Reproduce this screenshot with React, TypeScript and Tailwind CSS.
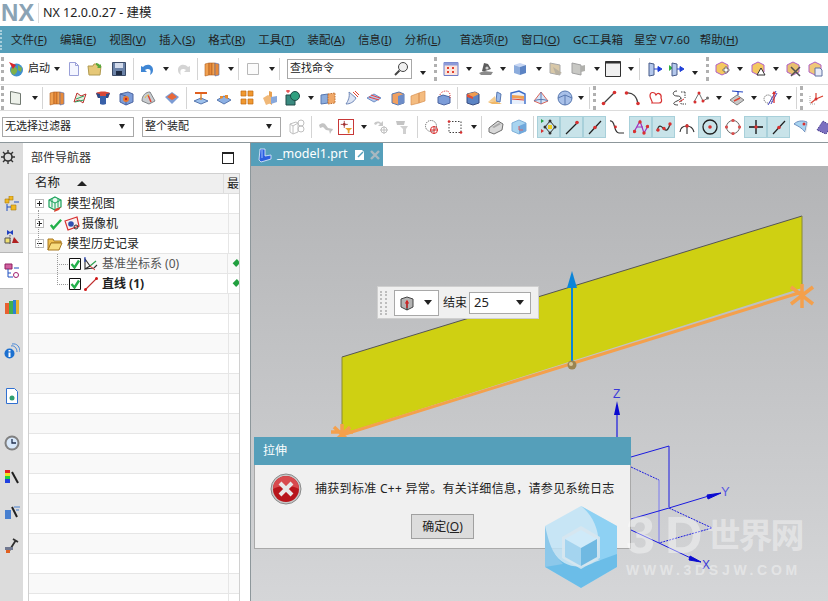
import type { ReactNode } from "react";

// 16x16 toolbar artwork, one entry per button
const art: Record<string, ReactNode> = {
  start: (
    <>
      <circle cx="8.5" cy="9" r="6.5" fill="#3f8fd0" />
      <path d="M3 8c2-3 5-2 6 0s-1 5-3 6c-2-1-4-3-3-6zM10 4l4 3-1 4-3-2z" fill="#7fb04a" />
      <path d="M1 1l7 3-3 4z" fill="#d8262a" />
    </>
  ),
  page: <path d="M3.5 1.5h6l3 3v10h-9zM9.5 1.5v3h3" fill="#f4f6ff" stroke="#9aa0d8" />,
  folder: (
    <>
      <path d="M1 5h5l1-2h3l1 2h3l-1 9H2z" fill="#e6c878" stroke="#b09a50" />
      <path d="M9 2c2 0 3 1 4 2l1-1v4h-4l1-1c-1-1-1-2-2-2z" fill="#5aa83c" />
    </>
  ),
  save: (
    <>
      <path d="M1.5 1.5h13v13h-13z" fill="#6c83a8" stroke="#3c4c68" />
      <path d="M4 2h8v5H4z" fill="#d4dcec" />
      <path d="M5 10h6v4H5z" fill="#1f2c44" />
    </>
  ),
  undo: <path d="M3 6c4-4 10-2 10 3 0 2-1 4-3 5 1-3 1-6-2-6-1 0-2 0-3 1l2 2H1V5z" fill="#3f86d4" />,
  redo: <path d="M13 6c-4-4-10-2-10 3 0 2 1 4 3 5-1-3-1-6 2-6 1 0 2 0 3 1l-2 2h6V5z" fill="#d4d4d4" />,
  bars: (
    <>
      <path d="M1 3l4-1v12l-4 1z" fill="#f0a050" stroke="#b06020" strokeWidth=".6" />
      <path d="M5 2h3v12H5z" fill="#e88a38" stroke="#b06020" strokeWidth=".6" />
      <path d="M8 2h3v12H8z" fill="#f0a050" stroke="#b06020" strokeWidth=".6" />
      <path d="M11 2l4 1v11l-4 1z" fill="#e88a38" stroke="#4a6cb8" strokeWidth=".6" />
    </>
  ),
  square: <path d="M2.5 2.5h11v11h-11z" fill="#fbfbfb" stroke="#b8b8b8" />,
  sheet: <path d="M2.5 1.5l10 2v11l-10-1z" fill="#edf1ea" stroke="#707870" />,
  redwin: (
    <>
      <path d="M1 1.5h14v13H1z" fill="#fbe4dc" stroke="#6c7cc8" />
      <path d="M1 1.5h14v3H1z" fill="#8c9ad8" />
      <path d="M4 6h2v2H4zM9 6h2v2H9zM4 10h2v2H4zM9 10h2v2H9z" fill="#e04030" />
    </>
  ),
  tool: (
    <>
      <path d="M1 12l5-2 9 1-2 3H3z" fill="#8a8a8a" />
      <path d="M4 10l2-8 4 1 3 5-6 2z" fill="#5c5c5c" />
      <circle cx="9" cy="7" r="1.6" fill="#d0d0d0" />
    </>
  ),
  bluebox: (
    <>
      <path d="M2 4l6-2 6 2-6 2z" fill="#c6d6f4" />
      <path d="M2 4l6 2v8l-6-2z" fill="#8cacdc" />
      <path d="M8 6l6-2v8l-6 2z" fill="#5c84c4" />
    </>
  ),
  tanplate: (
    <>
      <path d="M2 2l10 2v10L2 12z" fill="#d8c8a8" stroke="#a8a8a8" />
      <path d="M5 6l9 6-6 2z" fill="#b8b0a0" />
    </>
  ),
  grayplate: (
    <>
      <path d="M2 2l9 2v10l-9-2z" fill="#c8c8c4" stroke="#a0a0a0" />
      <path d="M11 5l4-1v6l-4 1z" fill="#b0b0ac" />
    </>
  ),
  win: (
    <>
      <path d="M.5.5h15v15H.5z" fill="#f0f0f0" stroke="#303030" />
      <path d="M.5.5h15v2H.5z" fill="#303030" />
    </>
  ),
  door: (
    <>
      <path d="M2 2l5 1v11l-5 1z" fill="#b4c8ec" stroke="#465a88" />
      <path d="M7 8h6M11 5.500l4 2.500-4 2.500z" fill="#2040d8" stroke="#2040d8" />
    </>
  ),
  door2: (
    <>
      <path d="M0 4l4 3-4 3z" fill="#30b040" />
      <path d="M3 2l5 1v11l-5 1z" fill="#b4c8ec" stroke="#465a88" />
      <path d="M8 8h4M11 5.500l4 2.500-4 2.500z" fill="#2040d8" stroke="#2040d8" />
    </>
  ),
  hexplus: (
    <>
      <path d="M8 1l6 3v7l-6 3-6-3V4z" fill="#f4c860" stroke="#b060c8" />
      <path d="M9 8h2V6h2v2h2v2h-2v2h-2v-2H9z" fill="#fff" stroke="#505050" strokeWidth=".7" />
    </>
  ),
  hextri: (
    <>
      <path d="M8 1l6 3v7l-6 3-6-3V4z" fill="#f4c860" stroke="#b060c8" />
      <path d="M11 7l4 7H7z" fill="#fff" stroke="#303030" />
    </>
  ),
  hexx: (
    <>
      <path d="M8 1l6 3v7l-6 3-6-3V4z" fill="#e8c070" stroke="#b060c8" />
      <path d="M6 6l9 9M15 6l-9 9" stroke="#505050" strokeWidth="1.500" />
    </>
  ),
  hexdoc: (
    <>
      <path d="M8 1l6 3v7l-6 3-6-3V4z" fill="#f0c878" stroke="#b060c8" />
      <path d="M8 7h5l2 2v6H8z" fill="#e8ecf8" stroke="#6070a0" />
    </>
  ),
  ribbon: (
    <>
      <path d="M2 12l3-9 4 3 5-2-3 9-4-3z" fill="#e4f0e0" stroke="#c03030" />
      <path d="M4 9l8-3M3 12l9-2" stroke="#30a060" />
    </>
  ),
  tee: (
    <>
      <path d="M1 3c3-2 11-2 14 0l-2 5H3z" fill="#d84838" />
      <path d="M5 6h6v8c-2 1-4 1-6 0z" fill="#3860a8" />
      <path d="M1 3l2 5h2V4zM15 3l-2 5h-2V4z" fill="#2c4c88" />
    </>
  ),
  hole: (
    <>
      <path d="M2 4l8-2 5 2v8l-7 3-6-3z" fill="#7c9cd8" stroke="#4c64a0" />
      <path d="M2 4l6 2v9" fill="none" stroke="#4c64a0" />
      <circle cx="8" cy="9" r="3" fill="#e87830" />
      <circle cx="8" cy="9" r="1.200" fill="#c02020" />
    </>
  ),
  dome: (
    <>
      <path d="M2 11c0-6 4-9 8-9l5 9-6 3z" fill="#c8ccd0" stroke="#808488" />
      <path d="M8 5l3 7" stroke="#e04030" strokeWidth="1.500" />
      <path d="M5 8c1-2 2-3 4-3" stroke="#e8c040" fill="none" />
    </>
  ),
  diamond: (
    <>
      <path d="M8 2l7 5-7 7-7-7z" fill="#7c9cd4" />
      <path d="M8 3l5 4-5 3-5-3z" fill="#e86838" />
    </>
  ),
  extrude: (
    <>
      <path d="M1 11l7-3 7 3-7 3z" fill="#9cc0ec" stroke="#5878b0" />
      <path d="M8 3v7" stroke="#e08020" strokeWidth="1.300" />
      <path d="M2 3h12" stroke="#e06020" strokeWidth="2" />
    </>
  ),
  lumps: (
    <>
      <path d="M1 10l7-4 7 4-7 4z" fill="#8cb0e4" stroke="#5878b0" />
      <path d="M4 9V6h3v2zM9 8V5h3v4z" fill="#e88c30" />
    </>
  ),
  cubes: <path d="M2 1h5v5H2zM9 1h5v5H9zM2 9h5v5H2zM9 9h5v5H9z" fill="#f09830" stroke="#c06810" strokeWidth=".7" />,
  halfplane: (
    <>
      <path d="M7 1l3 1v13l-3-2z" fill="#e8a050" />
      <path d="M1 8l5-3 3 2v6l-5 2z" fill="#f0b878" />
      <path d="M9 7l6-1v6l-6 2z" fill="#88a8dc" />
    </>
  ),
  merge: (
    <>
      <path d="M1 5h9v10H1z" fill="#3a8a80" stroke="#204c48" />
      <circle cx="10" cy="6" r="4.500" fill="#30a080" stroke="#204c48" />
      <path d="M1 1h4M3 0v3" stroke="#e02020" />
    </>
  ),
  blockhalf: (
    <>
      <path d="M1 5l7-1v9l-7 1z" fill="#8cacdc" stroke="#5878b0" />
      <path d="M8 4l7-1v10l-7 1z" fill="#f0a868" stroke="#c07030" strokeDasharray="1.500 1" />
    </>
  ),
  wing: (
    <>
      <path d="M5 2l7 6c-2 4-6 6-10 6 2-3 4-7 3-12z" fill="#dce4f4" stroke="#7088b8" />
      <path d="M9 2l5 5M11 1l4 4" stroke="#e04030" />
    </>
  ),
  slab: (
    <>
      <path d="M1 8l7-4 7 4-7 4z" fill="#b4c8ec" stroke="#7090c8" />
      <path d="M3 7l10 3M5 5l9 3" stroke="#e84040" />
    </>
  ),
  blockorange: (
    <>
      <path d="M2 4l7-2 5 2v9l-6 2-6-2z" fill="#f0a060" stroke="#5878b0" />
      <path d="M8 6l6-2v9l-6 2z" fill="#6c8cc8" />
    </>
  ),
  wedge: <path d="M1 6l8-3v10l-8 2zM9 3l6-2v10l-6 2z" fill="#f4bc80" stroke="#d89050" strokeWidth=".7" />,
  dashbox: (
    <>
      <path d="M2 7l5-2 7 2v6l-6 2-6-2z" fill="#7c9cd8" stroke="#4c64a0" />
      <path d="M4 5c0-2 3-4 6-4s4 2 4 4v3" fill="none" stroke="#e03030" strokeDasharray="1 1" />
    </>
  ),
  capbox: (
    <>
      <path d="M2 4l8-2 4 2v9l-6 2-6-2z" fill="#5c84c4" stroke="#384c80" />
      <path d="M2 4l8-2 4 2-6 3z" fill="#f09c50" />
      <path d="M2 4l6 3v2l-6-2z" fill="#e84c30" />
    </>
  ),
  fold: (
    <>
      <path d="M1 12l7-1 7 3H5z" fill="#f0b868" />
      <path d="M9 11l1-9 4 2-1 8z" fill="#9cbcec" stroke="#5878b0" />
      <path d="M1 12l7-6 1 5z" fill="#f4cc90" />
    </>
  ),
  frame: (
    <>
      <path d="M1 14V3l8-2 6 3v10" fill="#e8f0fc" stroke="#3c6cc8" strokeWidth="1.400" />
      <path d="M2 5l12 1v3l-12-1z" fill="#f0a050" />
      <path d="M2 9l12 1" stroke="#e04030" />
    </>
  ),
  cone: (
    <>
      <path d="M8 2l7 9-7 3-7-3z" fill="#d4e4f8" stroke="#d84030" strokeWidth=".8" />
      <path d="M8 2v12M1 11c3-2 11-2 14 0" stroke="#5878b0" fill="none" />
    </>
  ),
  sphere: (
    <>
      <circle cx="8" cy="8" r="7" fill="#a8c0e8" stroke="#5878b0" />
      <path d="M1 8l7-3 7 3M8 5v10" stroke="#5878b0" fill="none" />
    </>
  ),
  line: (
    <>
      <path d="M2 14L14 2" stroke="#404040" strokeWidth="1.200" />
      <circle cx="2.500" cy="13.500" r="1.800" fill="#d83030" />
      <circle cx="13.500" cy="2.500" r="1.800" fill="#d83030" />
    </>
  ),
  arc: (
    <>
      <path d="M2 3c7-1 11 4 12 11" stroke="#404040" strokeWidth="1.200" fill="none" />
      <circle cx="2.500" cy="3" r="1.800" fill="#d83030" />
      <circle cx="14" cy="13.500" r="1.800" fill="#d83030" />
    </>
  ),
  heart: <path d="M2 6c0-5 5-4 6-1 2-3 6-1 5 3 1 2 1 5-2 5H4c1-2-2-4-2-7z" fill="#fff" stroke="#d83030" strokeWidth="1.200" />,
  zig: (
    <>
      <path d="M6 1c-5 0-5 5 0 5s5 3 0 5-4 4 1 4" stroke="#404040" fill="none" />
      <path d="M10 2h5M14 2v6M10 8v6h5" stroke="#404040" strokeDasharray="1.500 1" fill="none" />
      <path d="M8 12l5-3" stroke="#d83030" />
    </>
  ),
  poly: (
    <>
      <path d="M1 12l5-9 4 8 5-3" stroke="#707070" fill="none" />
      <circle cx="2" cy="12" r="1.500" fill="#d83030" />
      <circle cx="6" cy="3" r="1.500" fill="#d83030" />
      <circle cx="10" cy="11" r="1.500" fill="#d83030" />
      <circle cx="14.500" cy="8" r="1.500" fill="#707070" />
    </>
  ),
  project: (
    <>
      <path d="M3 1l11 1M9 1v4" stroke="#2040c0" strokeWidth="1.200" />
      <path d="M1 10l7-5 7 5-7 5z" fill="#c8c8c8" stroke="#808080" />
      <path d="M5 11l6-3" stroke="#e04030" strokeWidth="1.500" />
    </>
  ),
  dotcross: (
    <>
      <circle cx="5" cy="9" r="4" fill="#fff" stroke="#505050" strokeDasharray="1 1" />
      <path d="M5 15L13 1M8 14L14 3" stroke="#4040c0" />
      <path d="M11 2v11" stroke="#d83030" strokeWidth="1.300" />
      <path d="M9 4l2-3 2 3z" fill="#d83030" />
    </>
  ),
  axes: (
    <>
      <path d="M7 9V3M7 9l7-3M7 9l-5 4" stroke="#d84030" strokeWidth="1.200" />
      <path d="M1 6v8h6" stroke="#a0a0a0" strokeDasharray="1 1" fill="none" />
      <circle cx="7" cy="9" r="1.500" fill="#d83030" />
    </>
  ),
  cubegray: (
    <g fill="none" stroke="#c0c0c0">
      <path d="M1 5l6-2 2 1v9l-5 2-3-2zM4 7v8M1 5l3 2 5-3" />
      <circle cx="12" cy="4" r="3" />
      <circle cx="12" cy="10" r="3" />
    </g>
  ),
  wrench: <path d="M1 6c2-2 5-2 6-1l3 4 5 1-1 2-6-1-3-3-3 1zM8 11l3 4M11 11h3l-2 4z" fill="#c4c4c4" />,
  funnel: (
    <>
      <path d="M6 1v8M2 5h8" stroke="#a03030" />
      <circle cx="6" cy="5" r="1.500" fill="#a03030" />
      <path d="M7 9h8l-3 3v3h-2v-3z" fill="#e8a030" />
    </>
  ),
  swirl: (
    <>
      <path d="M1 5c1-3 5-3 7-1l2-2v5H5l2-2c-1-1-3-1-4 1z" fill="#c8c8c8" />
      <circle cx="11" cy="11" r="3" fill="none" stroke="#c0c0c0" />
      <path d="M11 7v8M7 11h8" stroke="#c0c0c0" />
    </>
  ),
  grayfunnel: (
    <>
      <path d="M1 2h9l-1 4H2z" fill="#c4c4c4" />
      <path d="M5 7h8l-2 3v5H8v-5z" fill="#d0d0d0" />
    </>
  ),
  dashcircle: (
    <>
      <circle cx="7" cy="7" r="5.500" fill="#fff" stroke="#505050" strokeDasharray="1 1" />
      <circle cx="10" cy="11" r="3.500" fill="none" stroke="#d83030" />
      <path d="M10 7v8M6 11h8" stroke="#d83030" />
    </>
  ),
  dashrect: (
    <>
      <path d="M2 2.500h12v11H2z" fill="none" stroke="#404040" strokeDasharray="1.500 1.500" />
      <circle cx="2" cy="2.500" r="1.300" fill="#d83030" />
      <circle cx="14" cy="13.500" r="1.300" fill="#d83030" />
    </>
  ),
  grayblock: (
    <>
      <path d="M1 9l9-7 5 3-1 6-8 4-5-2z" fill="#d8d8d8" stroke="#707070" />
      <path d="M4 8l7-4 2 1-7 4z" fill="#a8a8a8" />
    </>
  ),
  glassbox: (
    <>
      <path d="M1 4l7-3 7 3v8l-7 3-7-3z" fill="#a8d4f0" stroke="#80b0d8" />
      <path d="M8 7l7-3v8l-7 3z" fill="#70a8dc" />
      <path d="M8 7v4h4" stroke="#e06060" fill="none" />
    </>
  ),
  snap: (
    <>
      <path d="M0 0l3 2-3 2z" fill="#20a040" />
      <path d="M0 10l3 2-3 2z" fill="#d83030" />
      <path d="M9 2l5 6-5 6-5-6z" fill="none" stroke="#303030" />
      <path d="M7 6h4v4H7z" fill="#f0d020" />
      <circle cx="9" cy="2" r="1.500" fill="#303030" />
      <circle cx="14" cy="8" r="1.500" fill="#303030" />
      <circle cx="9" cy="14" r="1.500" fill="#303030" />
      <circle cx="4" cy="8" r="1.500" fill="#303030" />
    </>
  ),
  lineEnd: (
    <>
      <path d="M2 15L14 3" stroke="#202020" strokeWidth="1.200" />
      <circle cx="13" cy="3.500" r="1.800" fill="#d83030" />
    </>
  ),
  lineMid: (
    <>
      <path d="M2 15L14 2" stroke="#202020" strokeWidth="1.200" />
      <circle cx="8" cy="8.500" r="1.800" fill="#d83030" />
    </>
  ),
  scurve: (
    <>
      <path d="M1 2c6-1 3 12 9 12h5" stroke="#303030" strokeWidth="1.200" fill="none" />
      <circle cx="6.500" cy="8" r="1.400" fill="#d83030" />
    </>
  ),
  vertexes: (
    <>
      <path d="M1 13L7 2l4 12 4-7" stroke="#a030c0" strokeWidth="1.200" fill="none" />
      <path d="M4 8h6" stroke="#a030c0" />
      <circle cx="1.500" cy="12.500" r="1.700" fill="#d83030" />
      <circle cx="7" cy="3" r="1.700" fill="#d83030" />
      <circle cx="11" cy="14" r="1.700" fill="#d83030" />
      <circle cx="14.500" cy="7.500" r="1.700" fill="#d83030" />
    </>
  ),
  wave: (
    <>
      <path d="M1 12c2-8 5-4 7-2s4 2 6-5" stroke="#303030" fill="none" strokeWidth="1.200" />
      <circle cx="2" cy="11" r="1.700" fill="#d83030" />
      <circle cx="8" cy="9.500" r="1.700" fill="#d83030" />
      <circle cx="14" cy="5" r="1.700" fill="#d83030" />
    </>
  ),
  arcpt: (
    <>
      <path d="M1 13c1-8 12-8 14 0M8 5v10" stroke="#303030" fill="none" strokeWidth="1.100" />
      <circle cx="8" cy="7" r="1.800" fill="#d83030" />
    </>
  ),
  ring: (
    <>
      <circle cx="8" cy="8" r="7" fill="none" stroke="#202020" strokeWidth="1.300" />
      <circle cx="8" cy="8" r="1.800" fill="#d83030" />
    </>
  ),
  ringpts: (
    <>
      <circle cx="8" cy="8" r="6.500" fill="none" stroke="#606060" />
      <circle cx="8" cy="1.500" r="1.600" fill="#d85050" />
      <circle cx="14.500" cy="8" r="1.600" fill="#d85050" />
      <circle cx="8" cy="14.500" r="1.600" fill="#d85050" />
      <circle cx="1.500" cy="8" r="1.600" fill="#d85050" />
    </>
  ),
  cross: (
    <>
      <path d="M8 1v14M1 8h14" stroke="#101010" strokeWidth="1.300" />
      <circle cx="8" cy="8" r="1.700" fill="#d83030" />
    </>
  ),
  shell: (
    <>
      <path d="M1 5c3-3 8-4 13-2l-2 10c-3-4-7-6-11-8z" fill="#a8d4f0" stroke="#7090c0" />
      <path d="M12 13c1-3 2-6 2-10l1 2-2 9z" fill="#e8e8e8" />
      <circle cx="11" cy="5" r="1.500" fill="#d83030" />
    </>
  ),
  mesh: <path d="M7 2l8 5-5 8-9-4z" fill="#7c70c0" stroke="#4c4090" strokeDasharray="1.500 .7" />,
  // navigator tree
  greencube: (
    <>
      <path d="M8 1l6 3v7l-6 3-6-3V4z" fill="#e8f8ee" stroke="#18a058" strokeWidth="1.200" />
      <path d="M2 4l6 3 6-3M8 7v7M5 2.500v9M11 2.500v9" stroke="#18a058" fill="none" />
      <path d="M8 13l6-2-2 3-5 2z" fill="#e04030" />
    </>
  ),
  camera: (
    <>
      <path d="M1 5l12-4 2 9-11 4z" fill="#f8f0f0" stroke="#d83030" strokeWidth="1.200" />
      <circle cx="7" cy="8" r="2.800" fill="#3050b0" />
      <circle cx="12" cy="11" r="2" fill="none" stroke="#303030" />
    </>
  ),
  datum: (
    <>
      <path d="M2 3v10l5-3zM2 13l9-1 3-3" fill="none" stroke="#303030" strokeWidth="1.100" />
      <path d="M2 6V1" stroke="#2040c0" />
      <path d="M7 10l6-5" stroke="#30a050" strokeWidth="1.200" />
      <path d="M7 10l5 4" stroke="#d83030" />
    </>
  ),
  redline: (
    <>
      <path d="M2 14L14 2" stroke="#c03030" strokeWidth="1.100" />
      <circle cx="2.500" cy="13.500" r="1.500" fill="#d01818" />
      <circle cx="13.500" cy="2.500" r="1.500" fill="#d01818" />
    </>
  ),
  // tab part
  part: (
    <>
      <path d="M3 2h5v7l6-1v4l-10 3-2-2z" fill="#2c60e0" stroke="#e8f0ff" strokeWidth=".8" />
      <path d="M5 3v8" stroke="#a0c0ff" />
    </>
  ),
  // left rail
  railassembly: (
    <>
      <path d="M5 0h4v4H5zM1 3h4v4H1zM7 9h5v5H7z" fill="#f0b820" stroke="#a87810" strokeWidth=".6" />
      <path d="M3 8v7M3 11h4M10 6h5" stroke="#2050c0" />
    </>
  ),
  railconstraint: (
    <>
      <path d="M3 1l3 2 3-2v5L6 4 3 6z" fill="#2040c0" />
      <path d="M6 6v10" stroke="#555" strokeDasharray="1.500 1" />
      <path d="M1 9h5v5H1z" fill="#f0e070" stroke="#555" />
      <path d="M8 14l7 0-5-6z" fill="#b02020" />
    </>
  ),
};

function Ic({ n, className = "", size = "w-4 h-4" }: { n: string; className?: string; size?: string }) {
  return (
    <svg viewBox="0 0 16 16" className={`shrink-0 ${size} ${className}`}>
      {art[n]}
    </svg>
  );
}

function Caret({ className = "" }: { className?: string }) {
  return <div className={`shrink-0 w-0 h-0 border-x-[3px] border-x-transparent border-t-[4px] border-t-[#222] ${className}`} />;
}

function Sep({ className = "" }: { className?: string }) {
  return <div className={`shrink-0 w-px h-[22px] bg-[#d4d4d4] ${className}`} />;
}

function Grip({ className = "" }: { className?: string }) {
  return <div className={`shrink-0 w-[3px] h-6 border-l-[3px] border-dotted border-[#b0b0b0] ${className}`} />;
}

// pale blue toggled button in the snap toolbar
function On({ n }: { n: string }) {
  return (
    <div className="shrink-0 w-[23px] h-[22px] flex items-center justify-center bg-[#c8e3e9] border border-[#a8d0da]">
      <Ic n={n} />
    </div>
  );
}

function Sel({ text, className }: { text: string; className: string }) {
  return (
    <div className={`shrink-0 h-5 flex items-center justify-between pl-[2px] pr-2 bg-white border border-[#a8a8a8] text-[11px] text-[#222] ${className}`}>
      <span>{text}</span>
      <Caret className="border-x-4 border-t-[5px]" />
    </div>
  );
}

function Menu({ label, k, className = "" }: { label: string; k?: string; className?: string }) {
  return (
    <span className={`shrink-0 ${className}`}>
      {label}
      {k && (
        <>
          (<span className="underline">{k}</span>)
        </>
      )}
    </span>
  );
}

function Check() {
  return (
    <svg viewBox="0 0 12 12" className="w-3 h-3 shrink-0">
      <path d="M.5.500h11v11H.5z" fill="#fff" stroke="#111" />
      <path d="M2.500 6l3 3.500L10 2.500" fill="none" stroke="#22b04a" strokeWidth="2.400" />
    </svg>
  );
}

function Expander({ minus }: { minus?: boolean }) {
  return (
    <div className="shrink-0 w-[9px] h-[9px] bg-white border border-[#bbb] flex items-center justify-center relative">
      <div className="w-[5px] h-px bg-[#222]" />
      {!minus && <div className="absolute w-px h-[5px] bg-[#222]" />}
    </div>
  );
}

const emptyRows = Array.from({ length: 16 }, (_, i) => i);

function Navigator() {
  return (
    <div className="w-[228px] shrink-0 bg-white border-r border-[#8d979b] pl-[5px] flex flex-col">
      <div className="h-[30px] shrink-0 flex items-center justify-between pl-[3px] pr-[16px] text-[12px] text-[#333]">
        <span>部件导航器</span>
        <div className="w-3 h-3 border border-[#222] border-t-2" />
      </div>
      <div className="w-[212px] flex-1 border-x border-t border-[#d0d0d0] relative overflow-hidden text-[12px] text-[#222]">
        <div className="h-5 flex bg-[#efefef] border-b border-[#ddd]">
          <div className="w-[200px] flex items-center pl-[6px] border-r border-[#ddd]">
            <span className="text-[12.5px]">名称</span>
            <div className="ml-[17px] w-0 h-0 border-x-[5px] border-x-transparent border-b-[5px] border-b-[#222]" />
          </div>
          <div className="pl-[3px] text-[12px] leading-5">最</div>
        </div>

        <TreeRow>
          <Expander />
          <Ic n="greencube" className="ml-[3px]" />
          <span className="ml-[4px]">模型视图</span>
        </TreeRow>
        <TreeRow odd>
          <Expander />
          <svg viewBox="0 0 14 12" className="w-3 h-3 ml-[6px] shrink-0">
            <path d="M1 7l3 4 9-10" fill="none" stroke="#22b04a" strokeWidth="2.800" />
          </svg>
          <Ic n="camera" className="ml-[2px]" />
          <span className="ml-[2px]">摄像机</span>
        </TreeRow>
        <TreeRow>
          <Expander minus />
          <svg viewBox="0 0 16 14" className="w-4 h-[14px] ml-[3px] shrink-0">
            <path d="M1 2h5l1 2h7v2H4l-3 7z" fill="#f0c050" stroke="#a87820" />
            <path d="M4 6h11l-3 7H1z" fill="#f8dc80" stroke="#a87820" />
          </svg>
          <span className="ml-1">模型历史记录</span>
        </TreeRow>
        <TreeRow odd mark>
          <div className="w-[34px] shrink-0" />
          <Check />
          <Ic n="datum" className="ml-[2px]" />
          <span className="ml-[3px] text-[#555]">基准坐标系 (0)</span>
        </TreeRow>
        <TreeRow mark>
          <div className="w-[34px] shrink-0" />
          <Check />
          <Ic n="redline" className="ml-[2px]" />
          <span className="ml-[3px] font-bold">直线 (1)</span>
        </TreeRow>
        {emptyRows.map((i) => (
          <TreeRow key={i} odd={i % 2 === 0} />
        ))}

        {/* dotted tree connectors */}
        <div className="absolute left-[9px] top-[36px] h-[38px] border-l border-dotted border-[#999]" />
        <div className="absolute left-[28px] top-[80px] h-[31px] border-l border-dotted border-[#999]" />
        <div className="absolute left-[28px] top-[90px] w-[11px] border-t border-dotted border-[#999]" />
        <div className="absolute left-[28px] top-[110px] w-[11px] border-t border-dotted border-[#999]" />
      </div>
    </div>
  );
}

function TreeRow({ children, odd, mark }: { children?: ReactNode; odd?: boolean; mark?: boolean }) {
  return (
    <div className={`h-5 flex border-b border-[#e6e6e6] ${odd ? "bg-[#f9f9f9]" : "bg-white"}`}>
      <div className="w-[200px] flex items-center pl-[6px] border-r border-[#e6e6e6] whitespace-nowrap">{children}</div>
      {mark && <div className="ml-[6px] mt-[6px] w-[5px] h-[6px] rotate-45 bg-[#22a040]" />}
    </div>
  );
}

function Rail() {
  return (
    <div className="w-[23px] shrink-0 bg-[#dcdcdc] flex flex-col items-center">
      <svg viewBox="0 0 14 14" className="w-[14px] h-[14px] mt-[7px] -ml-2">
        <circle cx="7" cy="7" r="4" fill="none" stroke="#333" strokeWidth="1.600" />
        <path d="M7 0v3M7 11v3M0 7h3M11 7h3M2 2l2 2M10 10l2 2M2 12l2-2M10 4l2-2" stroke="#333" strokeWidth="1.400" />
      </svg>
      <Ic n="railassembly" className="mt-[32px]" />
      <Ic n="railconstraint" className="mt-[17px]" />
      <div className="mt-[7px] w-full h-[37px] bg-white border-y border-[#b8b8b8] flex items-center justify-center">
        <svg viewBox="0 0 16 16" className="w-4 h-4">
          <path d="M1 1h7v5H1z" fill="#d060a0" stroke="#902060" />
          <path d="M4 6v8h5M4 10h3M10 5h5" stroke="#2050c0" fill="none" />
          <circle cx="12" cy="12" r="2.500" fill="none" stroke="#a02070" />
        </svg>
      </div>
      <svg viewBox="0 0 16 16" className="w-4 h-4 mt-[9px]">
        <path d="M1 5h4v11H1z" fill="#e86030" />
        <path d="M5 3h4v13H5z" fill="#40b050" />
        <path d="M9 2h3v14H9z" fill="#3080d0" />
        <path d="M12 2h3v14h-3z" fill="#e8b030" />
      </svg>
      <svg viewBox="0 0 16 16" className="w-4 h-4 mt-[29px]">
        <path d="M7 3c3-1 6 2 6 6M8 1c5-1 8 3 8 8" stroke="#4888d8" fill="none" />
        <circle cx="5.500" cy="10.500" r="5" fill="#1c70d0" />
        <path d="M4.500 7h2v1.500h-2zM4.500 9.500h2V14h-2z" fill="#fff" />
      </svg>
      <svg viewBox="0 0 16 16" className="w-4 h-4 mt-[29px]">
        <path d="M2.500.5h8l3 3v12h-11z" fill="#fff" stroke="#3070d0" />
        <circle cx="8" cy="10" r="2.500" fill="#30a070" />
      </svg>
      <svg viewBox="0 0 16 16" className="w-4 h-4 mt-[31px]">
        <circle cx="8" cy="8" r="7.500" fill="#808080" />
        <circle cx="8" cy="8" r="5.500" fill="#d8e8fa" />
        <path d="M8 4v4h4" stroke="#203050" strokeWidth="1.300" fill="none" />
      </svg>
      <svg viewBox="0 0 16 16" className="w-4 h-4 mt-[18px]">
        <path d="M1 1h5v3H1z" fill="#e02020" />
        <path d="M1 4h5v3H1z" fill="#f0e020" />
        <path d="M1 7h5v3H1z" fill="#20d040" />
        <path d="M1 10h5v4H1z" fill="#2040e0" />
        <path d="M8 3l6 11" stroke="#202020" strokeWidth="2" />
      </svg>
      <svg viewBox="0 0 16 16" className="w-4 h-4 mt-[19px]">
        <path d="M1 6h6v9H1z" fill="#4880d0" />
        <path d="M8 3l5 10" stroke="#202020" strokeWidth="2" />
        <path d="M10 3h6M12 6h3" stroke="#4880d0" />
      </svg>
      <svg viewBox="0 0 16 16" className="w-4 h-4 mt-[17px]">
        <path d="M5 14L12 3M9 2l5 3" stroke="#303030" strokeWidth="1.800" />
        <path d="M1 10h8v3H1z" fill="#707890" />
        <path d="M2 13h4v3H2z" fill="#e06020" />
      </svg>
    </div>
  );
}

function Model() {
  return (
    <svg viewBox="251 166 577 435" className="absolute inset-0 w-full h-full">
      <path d="M342 357L802 216V288L342 434Z" fill="#cfd012" />
      <path d="M342 357L802 216" stroke="#555" strokeWidth="1" fill="none" />
      <path d="M342 357V434M802 216V288" stroke="#8a8a30" strokeWidth="1" fill="none" />
      <path d="M342 435L802 292" stroke="#f4a04c" strokeWidth="3" fill="none" />
      <path d="M802 284V308M791 287L813 304M813 287L791 304" stroke="#f4a04c" strokeWidth="3.500" fill="none" />
      <path d="M342 424V445M331 432L353 432M334 427L350 442M350 427L334 442" stroke="#f4a04c" strokeWidth="3.500" fill="none" />
      <path d="M572 365V285" stroke="#0a84d8" strokeWidth="2" />
      <path d="M572 271L567 288H577Z" fill="#0a84d8" />
      <circle cx="572" cy="365" r="4.500" fill="#9a8450" />
      <circle cx="571" cy="364" r="2" fill="#d8c898" />

      <g fill="none" stroke="#1a1ae0" strokeWidth="1">
        <path d="M617 440V410" strokeWidth="1.200" />
        <path d="M631 457L669 446V507" />
        <path d="M631 467L659 480" strokeDasharray="2 1" />
        <path d="M659 480V543" stroke="#7a7af0" />
        <path d="M631 519L669 508L712 495" />
        <path d="M669 508L712 528L659 543" strokeDasharray="2 1" />
        <path d="M631 530L659 543L697 561" />
      </g>
      <path d="M617 401L614 415H620Z" fill="#0a0ad0" />
      <path d="M721 493L707 495L708 499Z" fill="#0a0ad0" stroke="#0a0ad0" />
      <path d="M701 562L690 556L689 560Z" fill="#0a0ad0" stroke="#0a0ad0" />
      <text x="613" y="398" fontSize="12" fill="#3a3ad8" fontFamily="Liberation Sans">Z</text>
      <text x="721" y="496" fontSize="13" fill="#5a5ae0" fontFamily="Liberation Sans">Y</text>
      <text x="702" y="569" fontSize="12" fill="#3a3ad8" fontFamily="Liberation Sans">X</text>
    </svg>
  );
}

function FloatBar() {
  return (
    <div className="absolute left-[126px] top-[120px] w-[162px] h-[33px] bg-[#f0f0f0] border border-[#cfcfcf] flex items-center text-[12px] text-[#222]">
      <div className="ml-[2px] shrink-0 w-[7px] h-[24px] border-x-[2px] border-dotted border-[#bdbdbd]" />
      <div className="ml-[7px] w-[45px] h-[26px] bg-white border border-[#a8a8a8] flex items-center justify-between pl-[4px] pr-[6px]">
        <svg viewBox="0 0 16 16" className="w-4 h-4">
          <path d="M2 4l6-2 6 2v8l-6 3-6-3z" fill="#b4b4b4" stroke="#444" />
          <path d="M8 6v9" stroke="#222" />
          <path d="M6.500 8.500L8 6l1.500 2.500M8 8v5" stroke="#e01818" strokeWidth="1.200" fill="none" />
        </svg>
        <Caret className="border-x-[4px] border-t-[5px]" />
      </div>
      <span className="ml-1">结束</span>
      <div className="ml-[2px] w-[62px] h-[22px] bg-white border border-[#a8a8a8] flex items-center justify-between pl-1 pr-[6px] text-[13px]">
        <span>25</span>
        <Caret className="border-x-[4px] border-t-[5px]" />
      </div>
    </div>
  );
}

function ErrorDialog() {
  return (
    <div className="absolute left-[3px] top-[271px] w-[377px] h-[112px] flex flex-col bg-[#f0f0f0] border-x border-b border-[#a9a9a9]">
      <div className="-mx-px h-[28px] bg-[#559fba] text-white text-[12px] flex items-center pl-[9px]">拉伸</div>
      <div className="flex items-center pl-[15px] mt-[8px] text-[12px] tracking-[0.3px] text-[#222]">
        <svg viewBox="0 0 32 32" className="w-8 h-8 shrink-0">
          <circle cx="16" cy="16" r="15" fill="#c8c8c8" stroke="#8a8a8a" />
          <circle cx="16" cy="16" r="13" fill="#b8161c" />
          <path d="M3 16a13 13 0 0 1 26 0c-6-4-20-4-26 0z" fill="#d84a4e" />
          <path d="M10 10l12 12M22 10L10 22" stroke="#e8e8e8" strokeWidth="4" />
        </svg>
        <span className="ml-[13px] whitespace-nowrap">捕获到标准 C++ 异常。有关详细信息，请参见系统日志</span>
      </div>
      <div className="mt-[9px] self-center w-[63px] h-[25px] bg-[#dcdcdc] border border-[#a0a0a0] flex items-center justify-center text-[12px] text-[#222]">
        <Menu label="确定" k="O" />
      </div>
    </div>
  );
}

function Watermark() {
  return (
    <>
      <svg viewBox="0 0 72 82" className="absolute left-[294px] top-[340px] w-[72px] h-[82px]">
        <path d="M36 0L72 20V61L36 82L0 61V20Z" fill="#bfe3f6" fillOpacity=".85" />
        <path d="M36 0L72 20V61L50 52C58 36 52 12 36 0Z" fill="#8ed1f3" />
        <path d="M0 61L36 82L72 61V48L50 56C36 64 18 62 8 46Z" fill="#6bbde8" />
        <path d="M0 20C4 36 6 46 18 58L0 61Z" fill="#8cc8ea" />
        <path d="M36 20L55 31V52L36 63L17 52V31Z" fill="#d8e6ee" fillOpacity=".85" />
        <path d="M36 24L52 33L36 42L20 33Z" fill="#cfeaf9" />
        <path d="M20 33L36 42V60L20 51Z" fill="#a4d4ef" />
        <path d="M52 33L36 42V60L52 51Z" fill="#70b9e2" />
      </svg>
      <div className="absolute left-[375px] top-[347px] flex flex-col text-white/40 font-bold">
        <div className="flex items-center h-[44px] whitespace-nowrap">
          <span className="font-['Liberation_Sans',sans-serif] text-[52px] tracking-[10px] leading-none">3D</span>
          <span className="-ml-[6px] text-[34px] tracking-[-2px] leading-none">世界网</span>
        </div>
        <div className="font-['Liberation_Sans',sans-serif] text-[14px] tracking-[3.7px] leading-[10px] mt-[8px] whitespace-nowrap">WWW.3DSJW.COM</div>
      </div>
    </>
  );
}

export default function App() {
  return (
    <div className="w-[828px] h-[601px] overflow-hidden flex flex-col bg-white font-['Noto_Sans','Noto_Sans_CJK_SC',sans-serif] text-[#222]">
      {/* title bar */}
      <div className="h-[26px] shrink-0 flex items-center">
        <span className="ml-[1px] w-[32px] font-['Liberation_Sans',sans-serif] font-bold text-[24px] leading-none text-[#8aa3b5]">NX</span>
        <div className="ml-[5px] w-px h-5 bg-[#ddd]" />
        <span className="ml-[4px] text-[12.5px] text-[#222]">NX 12.0.0.27 - 建模</span>
      </div>

      {/* menu bar */}
      <div className="h-[27px] shrink-0 bg-[#559fba] flex items-center text-[11.5px] text-[#222] gap-[13px] whitespace-nowrap">
        <div className="absolute left-0 w-[2px] h-[20px] border-l-2 border-dotted border-[#a8cfdc]" />
        <Menu label="文件" k="F" className="ml-[11px]" />
        <Menu label="编辑" k="E" />
        <Menu label="视图" k="V" />
        <Menu label="插入" k="S" />
        <Menu label="格式" k="R" />
        <Menu label="工具" k="T" />
        <Menu label="装配" k="A" />
        <Menu label="信息" k="I" />
        <Menu label="分析" k="L" />
        <Menu label="首选项" k="P" className="ml-[6px]" />
        <Menu label="窗口" k="O" />
        <Menu label="GC工具箱" />
        <Menu label="星空 V7.60" className="-ml-[2px]" />
        <Menu label="帮助" k="H" className="-ml-[3px]" />
      </div>

      {/* standard toolbar */}
      <div className="h-[32px] shrink-0 flex items-center border-b border-[#dcdcdc] overflow-hidden">
        <Grip className="ml-px" />
        <Ic n="start" className="ml-1" />
        <span className="ml-1 w-[23px] shrink-0 text-[11px]">启动</span>
        <Caret className="ml-[3px]" />
        <Ic n="page" className="ml-1.5" />
        <Ic n="folder" className="ml-[5px]" />
        <Ic n="save" className="ml-2" />
        <Sep className="ml-1.5" />
        <Ic n="undo" className="ml-1.5" />
        <Caret className="ml-[7px]" />
        <Ic n="redo" className="ml-1.5" />
        <Sep className="ml-1.5" />
        <Ic n="bars" className="ml-1.5" />
        <Caret className="ml-2" />
        <Sep className="ml-1" />
        <Ic n="square" className="ml-1.5" />
        <Caret className="ml-2" />
        <Sep className="ml-1" />
        <div className="ml-[7px] w-[125px] h-5 shrink-0 bg-white border border-[#a8a8a8] flex items-center justify-between pl-[2px] pr-[2px] text-[11px]">
          <span>查找命令</span>
          <svg viewBox="0 0 16 16" className="w-4 h-4">
            <circle cx="10" cy="6" r="4.500" fill="#f0f0f0" stroke="#444" />
            <path d="M6.500 9.500L2 14" stroke="#444" strokeWidth="2" />
          </svg>
        </div>
        <Caret className="ml-2 mt-2" />
        <Grip className="ml-2" />
        <Ic n="redwin" className="ml-1.5" />
        <Caret className="ml-[7px]" />
        <Ic n="tool" className="ml-1.5" />
        <Caret className="ml-1.5" />
        <Ic n="bluebox" className="ml-1.5" />
        <Caret className="ml-2" />
        <Ic n="tanplate" className="ml-1.5" />
        <Ic n="grayplate" className="ml-1.5" />
        <Caret className="ml-2" />
        <Ic n="win" className="ml-[5px]" />
        <Caret className="ml-[7px]" />
        <Sep className="ml-[5px]" />
        <Ic n="door" className="ml-[7px]" />
        <Ic n="door2" className="ml-1.5" />
        <Caret className="ml-[7px] mt-2" />
        <Grip className="ml-2" />
        <Ic n="hexplus" className="ml-[5px]" />
        <Caret className="ml-[7px]" />
        <Ic n="hextri" className="ml-[7px]" />
        <Caret className="ml-[7px]" />
        <Ic n="hexx" className="ml-1.5" />
        <Ic n="hexdoc" className="ml-1.5" />
      </div>

      {/* modelling toolbar */}
      <div className="h-[26px] shrink-0 flex items-center border-b border-[#dcdcdc] overflow-hidden">
        <Grip className="ml-px" />
        <Ic n="sheet" className="ml-1" />
        <Caret className="ml-2" />
        <Sep className="ml-1" />
        <Ic n="bars" className="ml-1.5" />
        <Ic n="ribbon" className="ml-[7px]" />
        <Ic n="tee" className="ml-[7px]" />
        <Ic n="hole" className="ml-[7px]" />
        <Ic n="dome" className="ml-1.5" />
        <Ic n="diamond" className="ml-2" />
        <Sep className="ml-1.5" />
        <Ic n="extrude" className="ml-1.5" />
        <Ic n="lumps" className="ml-[7px]" />
        <Ic n="cubes" className="ml-[7px]" />
        <Ic n="halfplane" className="ml-[7px]" />
        <Ic n="merge" className="ml-[7px]" />
        <Caret className="ml-[7px]" />
        <Ic n="blockhalf" className="ml-1.5" />
        <Ic n="wing" className="ml-2" />
        <Ic n="slab" className="ml-1.5" />
        <Ic n="blockorange" className="ml-2" />
        <Ic n="wedge" className="ml-1" />
        <Ic n="dashbox" className="ml-2.5" />
        <Sep className="ml-[5px]" />
        <Ic n="capbox" className="ml-[7px]" />
        <Ic n="fold" className="ml-1.5" />
        <Ic n="frame" className="ml-[7px]" />
        <Ic n="cone" className="ml-[7px]" />
        <Ic n="sphere" className="ml-2" />
        <Caret className="ml-[5px]" />
        <Sep className="ml-[5px]" />
        <Grip className="ml-[3px]" />
        <Ic n="line" className="ml-[5px]" />
        <Ic n="arc" className="ml-[7px]" />
        <Ic n="heart" className="ml-2" />
        <Ic n="zig" className="ml-[7px]" />
        <Ic n="poly" className="ml-1.5" />
        <Caret className="ml-[7px]" />
        <Ic n="project" className="ml-[7px]" />
        <Caret className="ml-1.5" />
        <Ic n="dotcross" className="ml-1.5" />
        <Caret className="ml-[7px]" />
        <Sep className="ml-1" />
        <Grip className="ml-[3px]" />
        <Ic n="axes" className="ml-1.5" />
      </div>

      {/* selection bar */}
      <div className="h-[31px] shrink-0 flex items-center overflow-hidden">
        <Sel text="无选择过滤器" className="ml-0.5 w-[132px]" />
        <Sel text="整个装配" className="ml-2 w-[139px]" />
        <Ic n="cubegray" className="ml-2" />
        <Sep className="ml-1.5" />
        <Ic n="wrench" className="ml-1.5" />
        <div className="ml-1 w-4 h-4 shrink-0 border border-[#c83838] flex items-center justify-center">
          <Ic n="funnel" size="w-[14px] h-[14px]" />
        </div>
        <Caret className="ml-[7px]" />
        <Ic n="swirl" className="ml-1.5" />
        <Ic n="grayfunnel" className="ml-1.5" />
        <Sep className="ml-1.5" />
        <Ic n="dashcircle" className="ml-1.5" />
        <Ic n="dashrect" className="ml-[7px]" />
        <Caret className="ml-2" />
        <Sep className="ml-1" />
        <Ic n="grayblock" className="ml-1.5" />
        <Ic n="glassbox" className="ml-[7px]" />
        <Sep className="ml-1.5" />
        <div className="ml-[3px] flex">
          <On n="snap" />
          <On n="lineEnd" />
          <On n="lineMid" />
        </div>
        <Ic n="scurve" className="ml-[3px]" />
        <div className="ml-1 flex">
          <On n="vertexes" />
          <On n="wave" />
        </div>
        <Ic n="arcpt" className="ml-1" />
        <div className="ml-[3px]">
          <On n="ring" />
        </div>
        <Ic n="ringpts" className="ml-1" />
        <div className="ml-[3px] flex">
          <On n="cross" />
          <On n="lineMid" />
        </div>
        <Ic n="shell" className="ml-[3px]" />
        <Ic n="mesh" className="ml-[7px]" />
      </div>

      {/* workspace */}
      <div className="flex-1 flex min-h-0 border-t border-[#8d979b]">
        <Rail />
        <Navigator />
        <div className="flex-1 flex flex-col min-w-0">
          <div className="h-[23px] shrink-0 flex bg-white">
            <div className="w-[132px] bg-[#559fba] flex items-center text-white">
              <Ic n="part" className="ml-[6px]" />
              <span className="ml-[4px] text-[12.5px]">_model1.prt</span>
              <svg viewBox="0 0 12 12" className="w-3 h-3 ml-[6px]">
                <path d="M1 1h7l2 2v8H1z" fill="#fff" />
                <path d="M4 8l5-5" stroke="#559fba" strokeWidth="1.500" />
              </svg>
              <svg viewBox="0 0 12 12" className="w-3 h-3 ml-[3px]">
                <path d="M2 2l8 8M10 2l-8 8" stroke="#a8b8c0" strokeWidth="2.400" />
              </svg>
            </div>
          </div>
          <div className="flex-1 relative bg-linear-to-b from-[#b3b4b6] to-[#d5d6d8] overflow-hidden">
            <Model />
            <FloatBar />
            <ErrorDialog />
            <Watermark />
          </div>
        </div>
      </div>
    </div>
  );
}
